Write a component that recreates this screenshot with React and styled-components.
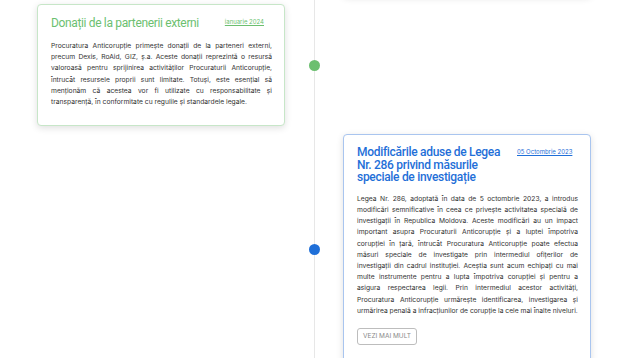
import React from "react";
import styled, { createGlobalStyle } from "styled-components";

const items = [
  {
    side: "right",
    color: "#1f6fd8",
    border: "#a9c5ef",
    clip: 60,
  },
  {
    side: "left",
    color: "#6cbf70",
    border: "#c7e6c8",
    title: "Donații de la partenerii externi",
    date: "ianuarie 2024",
    text:
      "Procuratura Anticorupție primește donații de la parteneri externi, precum Dexis, RoAid, GIZ, ș.a. Aceste donații reprezintă o resursă valoroasă pentru sprijinirea activităților Procuraturii Anticorupție, întrucât resursele proprii sunt limitate. Totuși, este esențial să menționăm că acestea vor fi utilizate cu responsabilitate și transparență, în conformitate cu regulile și standardele legale.",
    more: false,
  },
  {
    side: "right",
    color: "#1f6fd8",
    border: "#a9c5ef",
    title: "Modificările aduse de Legea Nr. 286 privind măsurile speciale de investigație",
    date: "05 Octombrie 2023",
    text:
      "Legea Nr. 286, adoptată în data de 5 octombrie 2023, a introdus modificări semnificative în ceea ce privește activitatea specială de investigații în Republica Moldova. Aceste modificări au un impact important asupra Procuraturii Anticorupție și a luptei împotriva corupției în țară, întrucât Procuratura Anticorupție poate efectua măsuri speciale de investigate prin intermediul ofițerilor de investigații din cadrul instituției. Aceștia sunt acum echipați cu mai multe instrumente pentru a lupta împotriva corupției și pentru a asigura respectarea legii. Prin intermediul acestor activități, Procuratura Anticorupție urmărește identificarea, investigarea și urmărirea penală a infracțiunilor de corupție la cele mai înalte niveluri.",
    more: true,
  },
];

function App() {
  return (
    <>
      <GlobalStyle />
      <Viewport>
        <Timeline>
          {items.map((item, i) => {
            // the entry above the fold is only a card edge with its shadow
            const card = (
              <Card $border={item.border} $clip={item.clip}>
                {item.title ? <CardBody item={item} /> : null}
              </Card>
            );
            return (
              <Row key={i}>
                {item.side === "left" ? card : <span />}
                <Dot $color={item.color} />
                {item.side === "right" ? card : <span />}
              </Row>
            );
          })}
        </Timeline>
      </Viewport>
    </>
  );
}

function CardBody({ item }) {
  const wide = item.side === "left";
  return (
    <>
      <Head>
        <Title $color={item.color} $wide={wide}>
          {item.title}
        </Title>
        <DateLink href="#" $color={item.color}>
          {item.date}
        </DateLink>
      </Head>
      <Text>{item.text}</Text>
      {item.more ? <MoreButton>Vezi mai mult</MoreButton> : null}
    </>
  );
}

export default App;

const GlobalStyle = createGlobalStyle`
  html, body {
    margin: 0;
    padding: 0;
    background: #fff;
    overflow: hidden;
  }
  body {
    font-family: Inter, "Noto Sans", sans-serif;
  }
`;

const Viewport = styled.div`
  height: 358px;
  overflow: hidden;
`;

const Timeline = styled.div`
  width: 554px;
  margin: -64px 0 0 37px;
  display: flex;
  flex-direction: column;
  gap: 8px;
  background: linear-gradient(#e7e7e7, #e7e7e7) no-repeat 277px 0 / 1px 100%;
`;

const Row = styled.div`
  display: grid;
  grid-template-columns: 248px 58px 248px;
  align-items: center;
`;

const Dot = styled.span`
  justify-self: center;
  width: 11px;
  height: 11px;
  border-radius: 50%;
  background: ${(p) => p.$color};
`;

const Card = styled.div`
  box-sizing: border-box;
  border: 1px solid ${(p) => p.$border};
  border-radius: 4px;
  background: #fff;
  box-shadow: 0 2px 7px rgba(0, 0, 0, 0.13);
  padding: 11px 12px 18px 13px;
  ${(p) => (p.$clip ? `height: ${p.$clip}px;` : "")}
`;

const Head = styled.div`
  display: flex;
  justify-content: space-between;
  align-items: flex-start;
  gap: 10px;
`;

const Title = styled.h3`
  margin: 0;
  flex: ${(p) => (p.$wide ? "1" : "0 0 150px")};
  color: ${(p) => p.$color};
  font-family: Roboto, "Noto Sans", sans-serif;
  font-size: 12px;
  letter-spacing: ${(p) => (p.$wide ? "-0.35px" : "-0.3px")};
  line-height: ${(p) => (p.$wide ? "15px" : "12.5px")};
  font-weight: ${(p) => (p.$wide ? 400 : 500)};
`;

const DateLink = styled.a`
  margin: 2px 8px 0 0;
  white-space: nowrap;
  color: ${(p) => p.$color};
  font-size: 6px;
  text-decoration: underline;
`;

const Text = styled.p`
  margin: 9px 0 0;
  color: #333;
  font-size: 6.725px;
  line-height: 11.2px;
  text-align: justify;
`;

const MoreButton = styled.button`
  display: block;
  box-sizing: border-box;
  height: 17px;
  margin-top: 12px;
  padding: 0 5px;
  border: 1px solid #bdbdbd;
  border-radius: 3px;
  background: #fff;
  color: #8a8a8a;
  font-family: inherit;
  font-size: 6.5px;
  text-transform: uppercase;
`;
